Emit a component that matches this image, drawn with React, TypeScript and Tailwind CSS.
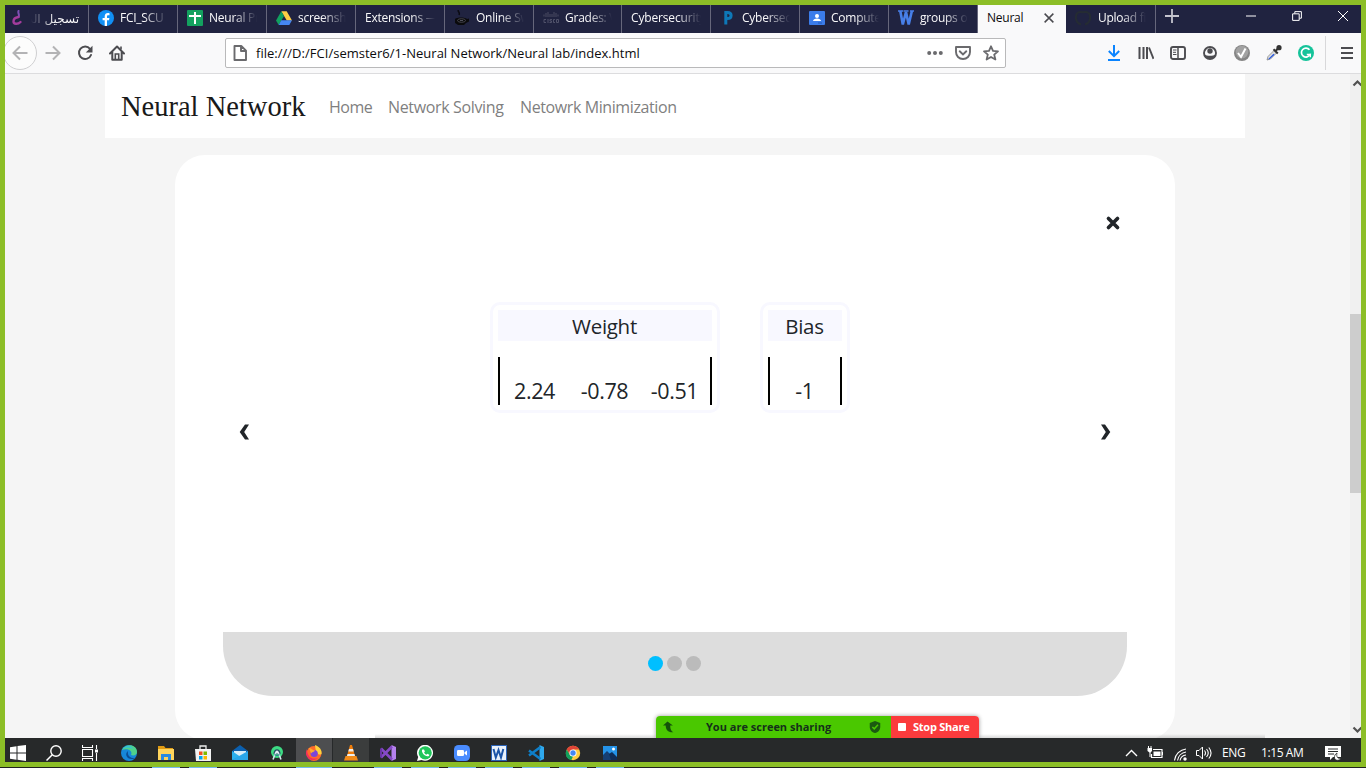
import React from "react";

const ui = "font-['Open_Sans','Noto_Sans',sans-serif]";

function Svg({ s = 16, className = "", children }: { s?: number; className?: string; children: React.ReactNode }) {
  return (
    <svg width={s} height={s} viewBox="0 0 16 16" fill="none" className={"shrink-0 " + className}>
      {children}
    </svg>
  );
}

const Facebook = () => (
  <Svg>
    <circle cx="8" cy="8" r="8" fill="#1190f5" />
    <path d="M9 16V10.2h2l.4-2.3H9V6.6c0-.8.3-1.3 1.4-1.3h1.1V3.2C11 3.1 10.500 3 9.900 3 8 3 6.700 4.200 6.700 6.300v1.600H4.600v2.300h2.100V16z" fill="#fff" />
  </Svg>
);
const Sheet = () => (
  <Svg>
    <rect width="16" height="16" rx="1" fill="#13a15f" />
    <path d="M2 5h12v2H2zM7 2h2v12H7z" fill="#fff" />
  </Svg>
);
const Drive = () => (
  <Svg>
    <path d="M5.300 1.300h5.400L16 10.500h-5.200z" fill="#ffcf45" />
    <path d="M5.300 1.300L8 6 2.700 15 0 10.500z" fill="#11a05f" />
    <path d="M5.300 10.300H16L13.300 15H2.700z" fill="#4587f4" />
  </Svg>
);
const Java = () => (
  <Svg>
    <path d="M4.500 0c-1.500 1.500 2 2 .500 5" stroke="#0b0b12" strokeWidth="1.500" />
    <path d="M1 9c2-2 10-2 12 0l2-.5v3l-3 1.500-2 2H4l-3-2z" fill="#0a0a0c" />
    <ellipse cx="7.500" cy="10.500" rx="4" ry="1.800" stroke="#50505a" strokeWidth=".8" />
    <path d="M6 10.500h3" stroke="#50505a" />
  </Svg>
);
const Cisco = () => (
  <Svg>
    <path d="M1 4.500v2M3 3v4M5 2v5M7 4v3M9 4v3M11 2v5M13 3v4M15 4.500v2" stroke="#474960" strokeWidth="1.100" />
    <path d="M3 9.500H1v3h2M5 9v4M9 9.500H7v1.500h1.500v1.500H6.500M12 9.500h-1.500v3H12M13.500 9.500h2v3h-2z" stroke="#50526a" strokeWidth="1" />
  </Svg>
);
const ParkingP = () => (
  <Svg>
    <path d="M5.800 14.500V2.500h1.700c4.800 0 4.800 6 0 6H6" stroke="#0e78b8" strokeWidth="3" />
  </Svg>
);
const Classroom = () => (
  <Svg>
    <rect y="1" width="16" height="14" rx="1" fill="#3b7cea" />
    <circle cx="8" cy="6" r="2" fill="#fff" />
    <path d="M4 11c0-3.500 8-3.500 8 0z" fill="#fff" />
    <path d="M9 13h4" stroke="#2358b5" />
  </Svg>
);
const WLogo = () => (
  <Svg>
    <path d="M0 1h5M5.500 1h5M12 1h4" stroke="#477fe8" strokeWidth="1.300" />
    <path d="M2.300 1l2.500 13.500L8 2l2.700 12.500L13.900 1" stroke="#477fe8" strokeWidth="2.600" />
  </Svg>
);
const Swirl = () => (
  <Svg>
    <path d="M9.500 1C8.500 3 11 4.500 9.500 7" stroke="#7d50b5" strokeWidth="2" strokeLinecap="round" />
    <path d="M9.500 7C6 7.500 4.500 9.500 4.500 11.500c0 3 4.500 3 7 .500" stroke="#a33c9c" strokeWidth="2.400" strokeLinecap="round" />
  </Svg>
);
const Octocat = () => (
  <Svg>
    <path d="M6 14.500C-1 12.500-.5 1.500 5.500 2l2.500.3 2.500-.3c6-.5 6.500 10.500-.5 12.500" stroke="#252c33" strokeWidth="2" />
  </Svg>
);

type Tab = { w: string; icon?: React.ReactNode; text: string; tw: string };
const tabs: Tab[] = [
  { w: "w-[89px]", icon: <Facebook />, text: "FCI_SCU", tw: "" },
  { w: "w-[89px]", icon: <Sheet />, text: "Neural Pr", tw: "" },
  { w: "w-[89px]", icon: <Drive />, text: "screensh", tw: "" },
  { w: "w-[89px]", text: "Extensions —", tw: "" },
  { w: "w-[89px]", icon: <Java />, text: "Online Sw", tw: "" },
  { w: "w-[88px]", icon: <Cisco />, text: "Grades: V", tw: "" },
  { w: "w-[89px]", text: "Cybersecurity", tw: "tracking-[-0.15px]" },
  { w: "w-[89px]", icon: <ParkingP />, text: "Cybersec", tw: "" },
  { w: "w-[89px]", icon: <Classroom />, text: "Compute", tw: "" },
  { w: "w-[89px]", icon: <WLogo />, text: "groups o", tw: "" },
];

function TabItem({ w, icon, text, tw }: Tab) {
  return (
    <div className={"flex h-full shrink-0 items-center border-r border-[#66677b] pr-[9px] pl-[9px] pb-[3px] " + w}>
      {icon && <span className="mr-[6px]">{icon}</span>}
      <span className={"min-w-0 flex-1 overflow-hidden whitespace-nowrap [mask-image:linear-gradient(to_right,black_calc(100%-24px),transparent)] " + tw}>
        {text}
      </span>
    </div>
  );
}

function TabBar() {
  return (
    <div className="flex h-[28px] shrink-0 bg-[#202340] text-[12px] tracking-[-0.25px] text-[#f9f9fa]">
      <div className="flex h-full w-[84px] shrink-0 items-center border-r border-[#66677b] pb-[3px] pl-[4px] pr-[9px]">
        <Swirl />
        <span dir="rtl" className="ml-[6px] min-w-0 flex-1 overflow-hidden whitespace-nowrap pt-[2px] font-['DejaVu_Sans',sans-serif] text-[12px] tracking-normal [mask-image:linear-gradient(to_left,black_calc(100%-24px),transparent)]">
          تسجيل الد
        </span>
      </div>
      {tabs.map((t, i) => (
        <TabItem key={i} {...t} />
      ))}
      <div className="flex w-[88px] shrink-0 items-center justify-between bg-[#f9f9fa] pb-[3px] pl-[9px] pr-[12px] text-[#0c0c0d]">
        <span>Neural</span>
        <Svg s={10}>
          <path d="M1 1l14 14M15 1L1 15" stroke="#4a4a4f" strokeWidth="2.400" />
        </Svg>
      </div>
      <TabItem w="w-[90px]" icon={<Octocat />} text="Upload fil" tw="pl-[1px]" />
      <Svg className="ml-[8px] mt-[3px]">
        <path d="M8 1v14M1 8h14" stroke="#c4c4ce" strokeWidth="1.800" />
      </Svg>
      <div className="ml-auto flex h-[22px] items-center gap-[36px] pr-[13px]">
        <Svg s={10}><path d="M0 8h16" stroke="#fff" strokeWidth="1.600" /></Svg>
        <Svg s={10}><path d="M1 4.500h10.500V15H1zM4.500 4V1H15v10.500h-3" stroke="#fff" strokeWidth="1.600" /></Svg>
        <Svg s={10}><path d="M0 0l16 16M16 0L0 16" stroke="#fff" strokeWidth="1.600" /></Svg>
      </div>
    </div>
  );
}

const ink = "#4c4c50";

function Toolbar() {
  return (
    <div className="flex h-[41px] shrink-0 items-center overflow-hidden border-b border-[#dcdcde] bg-[#f9f9fa]">
      <div className="-ml-[2px] flex size-[34px] shrink-0 items-center justify-center rounded-full border border-[#cfcfd1] bg-[#fcfcfc]">
        <Svg><path d="M15.500 8H1.500M8 1.500L1.500 8 8 14.500" stroke="#b3b3b5" strokeWidth="2" /></Svg>
      </div>
      <Svg className="ml-[8px]"><path d="M.5 8h14M8 1.500L14.500 8 8 14.500" stroke="#b3b3b5" strokeWidth="2" /></Svg>
      <Svg className="ml-[16px]">
        <path d="M13 3.800A6.200 6.200 0 1 0 14 10" stroke={ink} strokeWidth="2" strokeLinecap="round" />
        <path d="M15.500.8v6.700H8.800z" fill={ink} />
      </Svg>
      <Svg className="ml-[16px]">
        <path d="M1 8.500L8 1.500l7 7M3.300 7v7.700h9.400V7" stroke={ink} strokeWidth="2" strokeLinecap="round" strokeLinejoin="round" />
        <path d="M6.300 14V9h3.400v5M12 1.500v3" stroke={ink} strokeWidth="1.600" />
      </Svg>
      <div className="ml-[100px] flex h-[30px] w-[781px] items-center rounded-[2px] border border-[#b9b9ba] bg-white pl-[6px]">
        <Svg>
          <path d="M2.500 1h6.800L14 5.700V15H2.500zM9 1.500V6h4.500" stroke="#6a6a6d" strokeWidth="1.900" strokeLinejoin="round" />
        </Svg>
        <span className="ml-[8px] whitespace-nowrap pt-[2px] text-[13px] tracking-[0.02px] text-[#0c0c0d]">
          file:///D:/FCI/semster6/1-Neural Network/Neural lab/index.html
        </span>
        <div className="ml-auto flex gap-[12px] pr-[6px]">
          <Svg><circle cx="2.200" cy="8" r="2" fill="#6a6a6d" /><circle cx="8" cy="8" r="2" fill="#6a6a6d" /><circle cx="13.800" cy="8" r="2" fill="#6a6a6d" /></Svg>
          <Svg><path d="M1 2h14v5c0 4-3 7-7 7s-7-3-7-7z" stroke="#6a6a6d" strokeWidth="1.900" strokeLinejoin="round" /><path d="M4.700 6.300L8 9.500l3.300-3.200" stroke="#6a6a6d" strokeWidth="1.900" strokeLinecap="round" /></Svg>
          <Svg><path d="M8 1.300l2 4.600 5 .4-3.800 3.300 1.200 4.900L8 11.900l-4.400 2.600 1.200-4.900L1 6.300l5-.4z" stroke="#6a6a6d" strokeWidth="1.800" strokeLinejoin="round" /></Svg>
        </div>
      </div>
      <div className="ml-auto flex gap-[16px]">
        <Svg><path d="M8 0v11M2.800 6L8 11.200 13.200 6M2 15h12" stroke="#0a84ff" strokeWidth="2" /></Svg>
        <Svg><path d="M1.500 2v12M5.500 2v12M9 2v12" stroke={ink} strokeWidth="2" /><path d="M11 2.500l4.500 11.300" stroke={ink} strokeWidth="1.900" /></Svg>
        <Svg><rect x="1" y="2" width="14" height="12" rx="2" stroke={ink} strokeWidth="1.900" /><path d="M8 2v12" stroke={ink} strokeWidth="1.500" /><path d="M3 5h3.500M3 7.300h3M3 9.500h3.500" stroke={ink} /></Svg>
        <Svg><circle cx="8" cy="8" r="6" stroke={ink} strokeWidth="1.900" /><circle cx="8" cy="6" r="2.700" fill={ink} /><path d="M2.500 9.300c2 2 9 2 11 0-.5 6-10.500 6-11 0z" fill={ink} /></Svg>
        <Svg><circle cx="8" cy="8" r="8" fill="#858585" /><circle cx="8" cy="7" r="6.300" fill="#a2a2a2" /><path d="M4 8l3 4 4.500-8.500" stroke="#fff" strokeWidth="2" /></Svg>
        <Svg><path d="M1 15l1-3.500 6-6 2.500 2.500-6 6z" fill="#ddd" stroke="#888" strokeWidth=".8" /><path d="M2 14.200l5.500-5.500 1 1-5 4.500z" fill="#2657e0" /><path d="M7.500 4.300l4.300 4.200M9.500 6l4-4" stroke="#333" strokeWidth="2" /><circle cx="13" cy="2.700" r="2.600" fill="#333" /></Svg>
        <Svg><circle cx="8" cy="8" r="8" fill="#15c39a" /><path d="M11.500 4.800A4.500 4.500 0 1 0 12 9.500H8.800" stroke="#fff" strokeWidth="1.700" /><path d="M12.300 8.700v3.500" stroke="#fff" strokeWidth="1.400" /></Svg>
      </div>
      <div className="ml-[11px] h-[34px] w-px bg-[#d8d8da]" />
      <Svg className="ml-[13px] mr-[6px]"><path d="M2 3h12M2 8h12M2 13h12" stroke={ink} strokeWidth="2" strokeLinecap="butt" /></Svg>
    </div>
  );
}

function Matrix({ title, values, w, cells }: { title: string; values: string[]; w: string; cells: string }) {
  return (
    <div className={"flex h-[111px] flex-col rounded-[10px] border-[3px] border-[#f8f8ff] p-[5px] text-[#212529] " + w}>
      <div className="flex h-[31px] items-center justify-center bg-[#f8f8ff] pt-[1px] text-[20.5px] tracking-[-0.3px]">{title}</div>
      <div className={"mt-[16px] grid h-[48px] items-end border-x-2 border-black text-center text-[21.5px] leading-[28px] tracking-[-0.4px] " + cells}>
        {values.map((v) => (
          <span key={v}>{v}</span>
        ))}
      </div>
    </div>
  );
}

function Page() {
  return (
    <div className="flex min-w-0 flex-1 flex-col overflow-hidden bg-[#f5f5f5] pl-[100px] pr-[105px]">
      <nav className="flex h-[64px] shrink-0 items-center bg-white pl-[16px] pt-[1px] text-[16px] text-[#7f7f7f]">
        <span className="w-[208px] whitespace-nowrap pt-[1px] font-['Liberation_Serif',serif] text-[28.5px] text-[#191919]">Neural Network</span>
        <span className="w-[59px] tracking-[-0.5px]">Home</span>
        <span className="w-[132px] whitespace-nowrap tracking-[-0.35px]">Network Solving</span>
        <span className="whitespace-nowrap tracking-[-0.4px]">Netowrk Minimization</span>
      </nav>
      <main className="mx-[70px] mt-[17px] flex h-[585px] shrink-0 flex-col rounded-[30px] bg-white px-[48px]">
        <div className="flex justify-end pr-[6px] pt-[60px]">
          <Svg><path d="M3.500 3.500l9 9M12.500 3.500l-9 9" stroke="#212529" strokeWidth="3.700" strokeLinecap="round" /></Svg>
        </div>
        <div className="mt-[71px] flex h-[330px] justify-between">
          <Svg className="mt-[122px] ml-[14px]"><path d="M12 .500H8L2.700 8 8 15.500h4L7.200 8z" fill="#212529" /></Svg>
          <div className="mr-[11px] flex gap-[40px]">
            <Matrix title="Weight" values={["2.24", "-0.78", "-0.51"]} w="w-[230px]" cells="grid-cols-3" />
            <Matrix title="Bias" values={["-1"]} w="w-[90px]" cells="grid-cols-1" />
          </div>
          <Svg className="mt-[122px] mr-[14px]"><path d="M4 .500h4L13.300 8 8 15.500H4L8.800 8z" fill="#212529" /></Svg>
        </div>
        <div className="flex h-[64px] justify-center gap-[4px] rounded-b-[50px] bg-[#ddd] pr-[1px] pt-[24px]">
          <span className="size-[15px] rounded-full bg-[#00bfff]" />
          <span className="size-[15px] rounded-full bg-[#bbb]" />
          <span className="size-[15px] rounded-full bg-[#bbb]" />
        </div>
      </main>
    </div>
  );
}

function Scrollbar() {
  return (
    <div className="flex w-[11px] shrink-0 flex-col justify-between overflow-hidden bg-[#f0f0f0]">
      <Svg><path d="M3.500 11.500L7.500 7.500l4 4" stroke="#505050" strokeWidth="2.200" /></Svg>
      <div className="mt-[224px] h-[179px] bg-[#cdcdcd]" />
      <div className="flex-1" />
      <Svg><path d="M3.500 5.500l4 4 4-4" stroke="#505050" strokeWidth="2.200" /></Svg>
    </div>
  );
}

function ShareBar() {
  return (
    <div className="absolute bottom-0 left-[651px] flex h-[22px] w-[323px] overflow-hidden rounded-t-[4px] text-[11px] font-bold shadow-[0_0_4px_rgba(0,0,0,0.4)]">
      <div className="flex w-[235px] items-center bg-[#4ac800] pl-[7px] pr-[10px] text-[#15301a]">
        <Svg s={12}><path d="M5 .500L0 5h3c0 5 3 8 8.500 7.500C9 11 8 9 8 5h3z" transform="scale(1.200)" fill="#14530a" /></Svg>
        <span className="ml-[31px] whitespace-nowrap pt-[1px]">You are screen sharing</span>
        <Svg s={12} className="ml-auto"><path d="M8 0l7 2.500v5C15 12 12 15 8 16c-4-1-7-4-7-8.500v-5z" fill="#1b5a10" /><path d="M4.500 8L7 10.500 12 5" stroke="#4ac800" strokeWidth="2" /></Svg>
      </div>
      <div className="flex flex-1 items-center bg-[#fb3b3d] pl-[7px] text-white">
        <span className="mr-[7px] size-[8px] rounded-[1px] bg-white" />
        <span className="whitespace-nowrap tracking-[-0.25px]">Stop Share</span>
      </div>
    </div>
  );
}

const apps: { icon: React.ReactNode; open: boolean; bg?: string }[] = [
  { open: false, icon: <Svg><circle cx="8" cy="8" r="8" fill="#1687d9" /><path d="M1 5C4-2 16-1 16 7c0 3-3 4-6 3 2-4-3-7-9-5z" fill="#4fd18b" /><path d="M1 5c3-5 9-5 11-1-4-2-8-2-11 1z" fill="#32bfe3" /><path d="M7 6c-4 3-1 9 5 8 2-.3 3-1 3-1-5 1-9-2-8-7z" fill="#0b4d94" /></Svg> },
  { open: true, icon: <Svg><path d="M0 1h6l1.500 2H15v3H0z" fill="#e09a13" /><path d="M0 4h16v11H0z" fill="#ffd45c" /><path d="M3 15V9h10v6h-3v-3H6v3z" fill="#2a8ae0" /></Svg> },
  { open: true, icon: <Svg><path d="M5 4V1h6v3" stroke="#eee" strokeWidth="1.300" /><path d="M0 4h16v12H1z" fill="#f3f3f3" /><path d="M4 6.500h3.500V10H4z" fill="#f25022" /><path d="M8.500 6.500H12V10H8.500z" fill="#7fba00" /><path d="M4 11h3.500v3.500H4z" fill="#00a4ef" /><path d="M8.500 11H12v3.500H8.500z" fill="#ffb900" /></Svg> },
  { open: false, icon: <Svg><path d="M0 6l8-6 8 6v9H0z" fill="#0b5fae" /><path d="M2 6h12v3L8 12 2 9z" fill="#d8edf9" /><path d="M0 6l8 5.500L0 15z" fill="#2bb0ee" /><path d="M0 15L16 6v9z" fill="#29a6ea" /></Svg> },
  { open: false, icon: <Svg><circle cx="8" cy="7" r="6" fill="#3ddc84" /><path d="M4.500 9C4 2.500 12 2.500 11.500 9z" fill="#294b63" /><path d="M7 7L4 14.500M9 7l3 7.500" stroke="#d3e6ee" strokeWidth="1.600" /><path d="M5.500 9.500c2 1.500 3 1.500 5 0" stroke="#3c7790" strokeWidth="1.300" /><circle cx="8" cy="7" r="1.600" fill="#e2eef5" /></Svg> },
  { open: true, bg: "bg-[#4d4e50]", icon: <Svg><circle cx="8" cy="8.500" r="7.500" fill="#ff6a2a" /><path d="M9 0c5 2 7 5 6.500 9-3 2-6-1-6.500-9z" fill="#ffd23c" /><path d="M1 4c0 8 5 11 11 9-4 4-11 2-12-4 0-2 .3-4 1-5z" fill="#f52f5c" /><circle cx="8.200" cy="8.500" r="3.600" fill="#7b45d9" /><path d="M3 3c2 0 3 2 6 2.500-1 2-3 1-4 3z" fill="#ffab2d" /></Svg> },
  { open: false, bg: "bg-[#3b3d3d]", icon: <Svg><path d="M7 0h2l3 11H4z" fill="#f07d0a" /><path d="M6 4h4l.7 2.500H5.300zM4.500 9h7l.5 2H4z" fill="#eee" /><path d="M2.500 11h11L15 15.500H1z" fill="#f28b18" /></Svg> },
  { open: true, icon: <Svg><path d="M11.500 0L16 2v12l-4.500 2z" fill="#b582ee" /><path d="M1 3.500L12 14.500M1 12.500L12 1.500" stroke="#8549c7" strokeWidth="2.600" /><path d="M1 3.500v9" stroke="#6a34a7" strokeWidth="2" /></Svg> },
  { open: true, icon: <Svg><path d="M0 16l1.200-4A8 8 0 1 1 4.500 15z" fill="#fff" /><circle cx="8.200" cy="7.800" r="6.600" fill="#1fc65a" /><path d="M5.300 4.500c-1.500 2 2 7 5.500 6.800 1 0 1.700-1 1.500-1.600l-2-1-1 1c-1-.3-2-1.500-2.200-2.200l.8-1-.9-2z" fill="#fff" /></Svg> },
  { open: true, icon: <Svg><rect width="16" height="16" rx="4.500" fill="#4a8cff" /><rect x="3" y="5" width="7" height="6" rx="1.300" fill="#fff" /><path d="M10.500 7.300L13 5.500v5l-2.500-1.800z" fill="#fff" /></Svg> },
  { open: true, icon: <Svg><rect x=".5" y=".5" width="15" height="15" fill="#e9f1fb" stroke="#2b63b7" /><path d="M2.500 4l2.300 8.500L7.500 5l2.500 7.500L12.300 4" stroke="#1c55a8" strokeWidth="2" /></Svg> },
  { open: true, icon: <Svg><path d="M11.500 0L16 2v12l-4.500 2z" fill="#2fa9ee" /><path d="M1 5.500L12.500 14M1 10.500L12.500 2" stroke="#0e7fc9" strokeWidth="2.500" /></Svg> },
  { open: true, icon: <Svg><circle cx="8" cy="8" r="7.200" fill="#ffcd40" /><path d="M1.700 4.500A7.200 7.200 0 0 1 14.300 4.500H8L5 10z" fill="#e04437" /><path d="M1.700 4.500L5 10l3 1.500-1.700 3.600C1 14-.5 9 1.700 4.500z" fill="#12a05c" /><circle cx="8" cy="8" r="3.600" fill="#fff" /><circle cx="8" cy="8" r="2.700" fill="#4587f4" /></Svg> },
  { open: true, icon: <Svg><rect x="1" y="1" width="14" height="14" fill="#2493e8" /><path d="M1 10l4-4 9 9H1z" fill="#163f73" /><path d="M7 9l3-2 5 5v3H9z" fill="#0f2d58" /><circle cx="11.500" cy="4" r="1.500" fill="#fff" /></Svg> },
];

function Taskbar() {
  return (
    <div className="flex h-[24px] shrink-0 overflow-hidden bg-[#27292a]">
      <div className="flex w-[106px] shrink-0 gap-[20px] pl-[5px] pt-[7px]">
        <Svg><path d="M0 2.300L6.500 1.300V7.500H0zM7.500 1.100L16 0v7.500H7.500zM0 8.500h6.500v6.200L0 13.700zM7.500 8.500H16V16l-8.500-1.200z" fill="#fff" /></Svg>
        <Svg><circle cx="10" cy="6" r="5.200" stroke="#fff" strokeWidth="1.400" /><path d="M6.300 9.800L.5 15.500" stroke="#fff" strokeWidth="1.500" /></Svg>
        <Svg><path d="M.5 0v2.500h10V0M.5 16v-2.500h10V16M.5 4.500h10v7H.5zM14.500 0v4M14.500 8v8" stroke="#fff" strokeWidth="1.100" /><path d="M13 4.500h3v3h-3z" fill="#fff" /></Svg>
      </div>
      {apps.map((a, i) => (
        <div key={i} className={"mr-px flex w-[36px] shrink-0 justify-center pt-[7px] " + (a.bg ?? "")}>{a.icon}</div>
      ))}
      <div className="ml-auto flex shrink-0 pt-[7px] text-[12px] leading-[16px] text-white">
        <Svg className="mr-[8px]"><path d="M3 11L8.500 5.500l5.500 5.500" stroke="#fff" strokeWidth="1.400" /></Svg>
        <Svg className="mr-[11px]"><path d="M6 4.500h9v8H4.500V9" stroke="#fff" strokeWidth="1.200" /><path d="M6.500 6.500h7v4.500h-7zM15 7h1v3h-1zM.5 3h4.500v3L3.500 7.500h-1L.5 6z" fill="#fff" /><path d="M1.500 1v2M4 1v2M3 7v5" stroke="#fff" /></Svg>
        <Svg className="mr-[6px]"><path d="M.5 15.500A13 13 0 0 1 12 4M3.500 15.500A10 10 0 0 1 12 7M6 15.500A7 7 0 0 1 12 10" stroke="#fff" strokeWidth="1.100" /><circle cx="11" cy="14" r="1.700" fill="#fff" /></Svg>
        <Svg className="mr-[10px]"><path d="M.5 5.500H3L6.500 2v12L3 10.500H.5z" stroke="#fff" /><path d="M8.500 5.500q2 2.500 0 5M10.500 4q3.500 4 0 8M12.800 2.500q4.500 5.500 0 11" stroke="#fff" strokeWidth="1.100" /></Svg>
        <span className="w-[39px] tracking-[-0.4px]">ENG</span>
        <span className="w-[64px] whitespace-nowrap tracking-[-0.4px]">1:15 AM</span>
        <Svg className="mr-[20px]"><path d="M0 1h16v11H8l-3 3v-3H0z" fill="#fff" /><path d="M3 4h10M3 6.500h10M3 9h6" stroke="#27292a" /><path d="M12 8c-1 4 1 6 4 5-1 3-6 3-6.500 0C9.300 11 10 9 12 8z" fill="#fff" stroke="#27292a" strokeWidth=".8" /></Svg>
      </div>
    </div>
  );
}

export default function App() {
  return (
    <div className={"flex h-[768px] w-[1366px] flex-col overflow-hidden bg-[#1f2122] " + ui}>
      <div className="flex h-[767px] shrink-0 flex-col border-[5px] border-[#8cbe27]">
        <TabBar />
        <Toolbar />
        <div className="relative flex h-[664px] shrink-0 overflow-hidden">
          <Page />
          <Scrollbar />
          <div className="absolute bottom-0 left-[370px] h-[4px] w-[890px] bg-linear-to-t from-black/15 to-transparent" />
          <ShareBar />
        </div>
        <Taskbar />
      </div>
      <div className="flex h-px shrink-0 pl-[111px]">
        {apps.map((a, i) => (
          <div key={i} className="mr-px flex w-[36px] shrink-0 justify-center">
            <div className={"h-px " + (a.open ? (a.bg ? "w-[36px] bg-[#76b9ed]" : "w-[28px] bg-[#76b9ed]") : "w-0")} />
          </div>
        ))}
      </div>
    </div>
  );
}
